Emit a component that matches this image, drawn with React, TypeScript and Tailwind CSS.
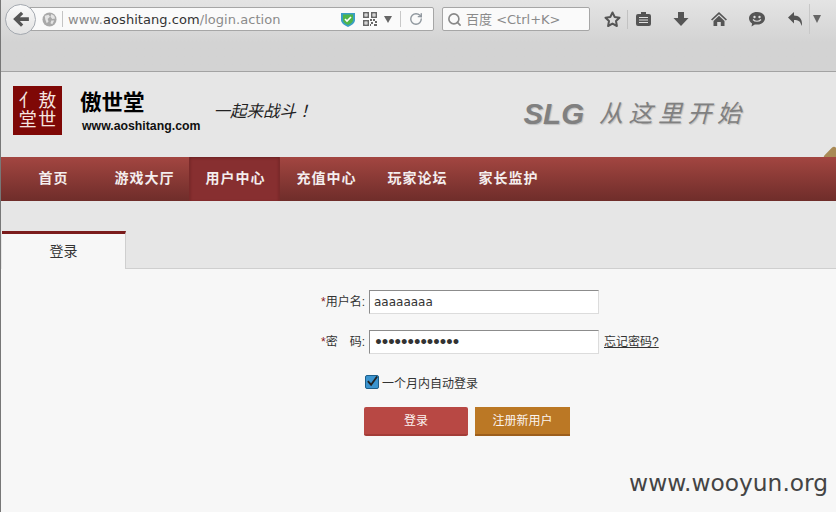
import React from 'react';
import { Search, RotateCw } from 'lucide-react';

const navItems = [
  { label: '首页', active: false },
  { label: '游戏大厅', active: false },
  { label: '用户中心', active: true },
  { label: '充值中心', active: false },
  { label: '玩家论坛', active: false },
  { label: '家长监护', active: false },
];

const QrIcon = () => (
  <svg width="14" height="14" viewBox="0 0 14 14" fill="#666">
    <path d="M0 0h6v6H0zM1.5 1.5v3h3v-3zM8 0h6v6H8zM9.5 1.5v3h3v-3zM0 8h6v6H0zM1.5 9.5v3h3v-3z" fillRule="evenodd" />
    <path d="M2.5 2.5h1v1h-1zM10.5 2.5h1v1h-1zM2.5 10.5h1v1h-1zM7 7h2v2H7zM10 7h2v2h-2zM12 9h2v2h-2zM8 10h2v2H8zM11 12h3v2h-3zM7 12h1v2H7z" />
  </svg>
);

const Toolbar = () => (
  <div className="h-[72px] shrink-0 border-b border-[#a3a3a3] bg-gradient-to-b from-[#e4e4e4] to-[#d3d3d3] to-[60%] pt-[7px] font-['DejaVu_Sans',sans-serif]">
    <div className="flex h-[24px] items-center">
      {/* back button */}
      <div className="z-10 ml-[4px] flex h-[31px] w-[31px] shrink-0 items-center justify-center rounded-full border border-[#a4a9b0] bg-gradient-to-b from-[#fafafa] to-[#e2e2e2]">
        <svg width="18" height="18" viewBox="0 0 16 16" fill="#555">
          <path d="M8 1.500 10 3.500 7 6.500H15V9.800H7L10 12.800 8 14.800 1 8.100Z" />
        </svg>
      </div>
      {/* url bar */}
      <div className="-ml-[10px] flex h-[24px] w-[408px] items-center rounded-r-[2px] border border-[#a6a6a6] bg-[#fafafa]">
        <svg className="ml-[15px]" width="15" height="15" viewBox="0 0 16 16">
          <circle cx="8" cy="8" r="7.500" fill="#a9a9a9" />
          <path d="M3 4 7 3 8.500 5 6 7.500 7 10 5 12 3.500 8ZM10 2l3 2 1 3-3 .5-2-2.500ZM10 9l3 0-2 4-2-1Z" fill="#e4e4e4" />
        </svg>
        <div className="ml-[5px] h-[16px] w-px bg-[#c4c4c4]" />
        <div className="ml-[5px] w-[272px] whitespace-nowrap text-[13px] leading-none tracking-[0.05px] text-[#8a8a8a]">
          www.<span className="text-[#333]">aoshitang.com</span>/login.action
        </div>
        <svg className="ml-[1px]" width="14" height="15" viewBox="0 0 14 15">
          <path d="M0 1h14v7c0 3-3 5-7 7-4-2-7-4-7-7Z" fill="#3a9fc4" />
          <path d="M2 2.500h10v5.500c0 2-2 3.600-5 5-3-1.400-5-3-5-5Z" fill="#4fb548" />
          <path d="M4 7l2 2 4-4" stroke="#fff" strokeWidth="1.600" fill="none" />
        </svg>
        <div className="ml-[8px]">
          <QrIcon />
        </div>
        <div className="ml-[7px] h-0 w-0 border-x-[4px] border-t-[7px] border-x-transparent border-t-[#666]" />
        <div className="ml-[8px] h-[16px] w-px bg-[#c8c8c8]" />
        <RotateCw className="ml-[8px] text-[#8f979e]" size={14} strokeWidth={2.4} />
      </div>
      {/* search */}
      <div className="ml-[8px] flex h-[24px] w-[148px] items-center rounded-[2px] border border-[#a6a6a6] bg-[#fafafa] pl-[4px]">
        <Search className="text-[#888]" size={15} strokeWidth={2.6} />
        <span className="ml-[4px] whitespace-nowrap font-['DejaVu_Sans','Noto_Sans_CJK_SC',sans-serif] text-[13px] leading-none text-[#8a8a8a]">
          百度 &lt;Ctrl+K&gt;
        </span>
      </div>
      {/* right icons */}
      <svg className="ml-[14px]" width="17" height="17" viewBox="0 0 17 17">
        <path d="M8.500 1.500 10.700 6 15.500 6.700 12 10 12.900 15 8.500 12.600 4.100 15 5 10 1.500 6.700 6.300 6Z" fill="none" stroke="#555" strokeWidth="2" strokeLinejoin="round" />
      </svg>
      <div className="ml-[6px] h-[19px] w-px bg-[#c2c2c2]" />
      <svg className="ml-[8px]" width="15" height="16" viewBox="0 0 15 16">
        <path d="M5 1h5v2h3a2 2 0 0 1 2 2v8a2 2 0 0 1-2 2H2a2 2 0 0 1-2-2V5a2 2 0 0 1 2-2h3Z" fill="#555" />
        <path d="M3 6h9v1H3zM3 8.500h9v1H3zM3 11h9v1H3z" fill="#e0e0e0" />
      </svg>
      <svg className="ml-[22px]" width="16" height="16" viewBox="0 0 16 16" fill="#555">
        <path d="M5 1h6v6h4.500L8 15 .5 7H5Z" />
      </svg>
      <svg className="ml-[22px]" width="16" height="16" viewBox="0 0 16 16" fill="#555">
        <path d="M8 1 16 8.500 14.800 9.500 8 3.200 1.200 9.500 0 8.500Z" />
        <path d="M8 4.800 13.500 10V15H9.800V11H6.200V15H2.500V10Z" />
      </svg>
      <svg className="ml-[22px]" width="16" height="16" viewBox="0 0 16 16">
        <path d="M8 1c4.400 0 8 2.600 8 6.300S12.400 13.600 8 13.600c-.8 0-1.500-.1-2.200-.2L2.500 15.500l.6-3C1.200 11.300 0 9.500 0 7.300 0 3.600 3.600 1 8 1Z" fill="#555" />
        <circle cx="5.500" cy="6" r="1.200" fill="#ddd" />
        <circle cx="10.500" cy="6" r="1.200" fill="#ddd" />
        <path d="M4 8.500c2 2.300 6 2.300 8 0" stroke="#ddd" strokeWidth="1.200" fill="none" />
      </svg>
      <svg className="ml-[22px]" width="16" height="16" viewBox="0 0 16 16" fill="#555">
        <path d="M7 1v3.500c5 0 8 3 8 8.500l-.5 2c-.8-4.500-3-6-7.500-6V12.500L1 6.500Z" />
      </svg>
      <div className="ml-[6px] h-[30px] w-px bg-[#c8c8c8]" />
      <div className="ml-[3px] h-0 w-0 border-x-[4.500px] border-t-[8px] border-x-transparent border-t-[#666]" />
    </div>
  </div>
);

const SiteHeader = () => (
  <div className="relative flex h-[85px] shrink-0 items-start overflow-hidden bg-[#e6e6e6] font-['Liberation_Sans','Noto_Sans_CJK_SC',sans-serif]">
    {/* seal logo */}
    <div className="ml-[12px] mt-[14px] grid h-[49px] w-[49px] grid-cols-2 place-items-center bg-[#7f0806] p-[5px] text-[18px] leading-none text-[#f5e6e0]">
      <span>亻</span>
      <span>敖</span>
      <span>堂</span>
      <span>世</span>
    </div>
    <div className="ml-[18px] mt-[18px] flex flex-col">
      <span className="text-[21.500px] font-bold leading-[27px] text-black">傲世堂</span>
      <span className="mt-[2px] pl-[2px] text-[12.300px] font-bold leading-[14px] text-[#111]">www.aoshitang.com</span>
    </div>
    <div className="ml-[13px] mt-[28px] font-['Liberation_Serif','Noto_Sans_CJK_JP',serif] text-[16.500px] italic leading-[24px] text-[#222]">
      一起来战斗！
    </div>
    <div className="ml-[211px] mt-[24px] flex items-center whitespace-nowrap font-['Liberation_Sans','Noto_Sans_CJK_SC',sans-serif] italic text-[#808080] [text-shadow:1px_1px_1px_#bdbdbd]">
      <span className="text-[29.500px] font-bold leading-[36px]">SLG</span>
      <span className="ml-[15px] text-[24px] leading-[36px] tracking-[5.500px]">从这里开始</span>
    </div>
    <div className="absolute -bottom-[8px] -right-[6px] h-[16px] w-[16px] rotate-45 rounded-[3px] bg-[#a98a56]" />
  </div>
);

const NavBar = () => (
  <div className="flex h-[44px] shrink-0 bg-gradient-to-b from-[#a34641] to-[#6f2d2a] pb-[2px] pl-[6px] font-['Liberation_Sans','Noto_Sans_CJK_SC',sans-serif] text-[14px] font-bold tracking-[1px] text-[#f4eeee]">
    {navItems.map((item) => (
      <div
        key={item.label}
        className={`-mb-[2px] flex w-[91px] items-center justify-center pl-[2px] ${item.active ? 'border-x border-[#7a2a2a] bg-[#872f30] shadow-[inset_0_1px_3px_#6d2222]' : ''}`}
      >
        <span className="-mt-[2px]">{item.label}</span>
      </div>
    ))}
  </div>
);

const FormRow = ({ label, type, value, forgot }: { label: React.ReactNode; type: string; value: string; forgot?: boolean }) => (
  <div className="flex h-[24px] items-center">
    <div className="w-[48px] whitespace-nowrap text-[12px] leading-none text-[#333]">
      <span className="text-[#8b1a1a]">*</span>
      {label}
    </div>
    <input
      readOnly
      type={type}
      value={value}
      className={`h-[24px] w-[230px] border border-[#dcdcdc] border-l-[#8c8c8c] border-t-[#8c8c8c] bg-white px-[4px] font-['DejaVu_Sans',sans-serif] text-[#333] outline-none ${type === 'password' ? 'text-[14px] font-bold tracking-[-2.500px]' : 'text-[12px]'}`}
    />
    {forgot && <span className="ml-[5px] whitespace-nowrap text-[12px] leading-none text-[#333] underline">忘记密码?</span>}
  </div>
);

const App: React.FC = () => {
  return (
    <div className="relative flex h-[512px] w-[836px] flex-col overflow-hidden border-l border-[#777]">
      <Toolbar />
      <SiteHeader />
      <NavBar />

      {/* tab strip */}
      <div className="flex h-[68px] shrink-0 items-end bg-[#e6e6e6] pl-[1px] font-['Liberation_Sans','Noto_Sans_CJK_SC',sans-serif]">
        <div className="flex h-[38px] w-[124px] items-center justify-center border-r border-[#cfcfcf] border-t-[3px] border-t-[#7b1c1c] bg-[#f7f7f7] text-[14px] text-[#333]">
          登录
        </div>
        <div className="h-px flex-1 bg-[#cfcfcf]" />
      </div>

      {/* login form */}
      <div className="flex flex-1 flex-col bg-[#f7f7f7] pl-[320px] pt-[21px] font-['Liberation_Sans','Noto_Sans_CJK_SC',sans-serif]">
        <FormRow label="用户名:" type="text" value="aaaaaaaa" />
        <div className="mt-[16px]">
          <FormRow
            label={
              <span>
                密<span className="inline-block w-[12px]" />码:
              </span>
            }
            type="password"
            value="aaaaaaaaaaaaa"
            forgot
          />
        </div>
        <div className="ml-[44px] mt-[20px] flex items-center">
          <div className="flex h-[14px] w-[14px] items-center justify-center rounded-[2px] border border-[#1d5f8a] bg-[#3b94cf]">
            <svg width="13" height="13" viewBox="0 0 13 13" className="-mt-[2px]">
              <path d="M2 6 5.500 10 12 1" stroke="#222" strokeWidth="2" fill="none" />
            </svg>
          </div>
          <span className="ml-[3px] mt-[4px] text-[12px] leading-none text-[#333]">一个月内自动登录</span>
        </div>
        <div className="ml-[43px] mt-[17px] flex text-[12px] text-[#fbf4f0]">
          <div className="flex h-[29px] w-[104px] items-center justify-center rounded-[2px] border-b-2 border-[#a33c38] bg-[#b84844]">登录</div>
          <div className="ml-[7px] flex h-[29px] w-[95px] items-center justify-center border-b-2 border-[#9c5e1c] bg-[#bb7825]">注册新用户</div>
        </div>
      </div>

      {/* watermark */}
      <div className="absolute bottom-[18px] right-[8px] font-['DejaVu_Sans',sans-serif] text-[23.300px] leading-none text-[#444]">
        www.wooyun.org
      </div>
    </div>
  );
};

export default App;
